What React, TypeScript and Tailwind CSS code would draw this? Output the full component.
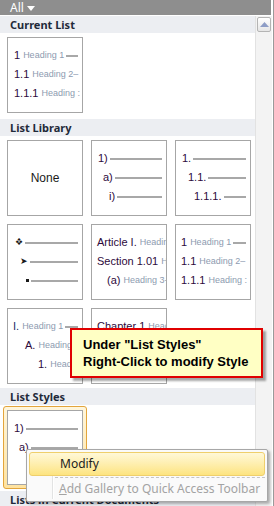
import React from "react";

const NUM = "text-[#2d0a3c]";
const HEAD = "text-[#8d9bb0] text-[9px]";

function Thumb({ children, className = "" }: { children?: React.ReactNode; className?: string }) {
  return (
    <div className={`relative h-[76px] w-[76px] overflow-hidden border border-[#a6a6a6] bg-white ${className}`}>
      {children}
    </div>
  );
}

function Line({ w }: { w?: string }) {
  return <span className={`ml-[2px] h-[2px] bg-[#a8a8a8] ${w ?? "flex-1"}`} />;
}

// pila de filas de texto dentro de cada miniatura
function Rows({ children }: { children: React.ReactNode }) {
  return (
    <div className="flex flex-col pt-[8px] pr-[4px] font-['Liberation_Sans',Arial,sans-serif] text-[11px] leading-[19px]">
      {children}
    </div>
  );
}

function HeadingRow({ num, label, pl }: { num: string; label: string; pl: string }) {
  return (
    <div className={`flex h-[19px] items-center whitespace-nowrap ${pl}`}>
      <span className={NUM}>{num}</span>
      <span className={`ml-[3px] ${HEAD}`}>{label}</span>
    </div>
  );
}

function NumRow({ num, pl }: { num: string; pl: string }) {
  return (
    <div className={`flex h-[19px] items-center whitespace-nowrap ${pl}`}>
      <span className={NUM}>{num}</span>
      <Line />
    </div>
  );
}

function SectionHeader({ title }: { title: string }) {
  return (
    <div className="h-[17px] bg-[#eceef2] pl-[10px] font-['Noto_Sans',sans-serif] text-[11px] font-bold leading-[17px] text-[#1f2a3a]">
      {title}
    </div>
  );
}

export default function App() {
  return (
    <div className="relative h-[506px] w-[274px] overflow-hidden border-r border-[#9a9a9a] bg-white font-['Noto_Sans',sans-serif]">
      {/* Barra superior "All" */}
      <div className="flex h-[16px] w-[271px] items-center border-b border-white bg-[#8e8e8e] pl-[10px] text-[12px] leading-none text-white">
        <span>All</span>
        <svg className="ml-[3px] mt-[1px] h-[5px] w-[8px]" viewBox="0 0 8 5">
          <path d="M0 0h8L4 5z" fill="white" />
        </svg>
      </div>

      <div className="flex h-[490px]">
        {/* Contenido de la galería */}
        <div className="w-[256px] border-r border-[#e2e2e2]">
          <SectionHeader title="Current List" />
          <div className="pb-[6px] pl-[7px] pt-[4px]">
            <Thumb>
              <Rows>
                <div className="flex h-[19px] items-center whitespace-nowrap pl-[6px]">
                  <span className={NUM}>1</span>
                  <span className={`ml-[3px] ${HEAD}`}>Heading 1</span>
                  <Line />
                </div>
                <HeadingRow num="1.1" label="Heading 2–" pl="pl-[6px]" />
                <HeadingRow num="1.1.1" label="Heading :" pl="pl-[6px]" />
              </Rows>
            </Thumb>
          </div>

          <SectionHeader title="List Library" />
          <div className="grid grid-cols-[76px_76px_76px] gap-[8px] px-[7px] pb-[4px] pt-[4px]">
            <Thumb className="flex items-center justify-center">
              <div className="flex h-full items-center justify-center font-['Liberation_Sans',Arial,sans-serif] text-[12px] text-[#1a1a1a]">
                None
              </div>
            </Thumb>
            <Thumb>
              <Rows>
                <NumRow num="1)" pl="pl-[6px]" />
                <NumRow num="a)" pl="pl-[11px]" />
                <NumRow num="i)" pl="pl-[17px]" />
              </Rows>
            </Thumb>
            <Thumb>
              <Rows>
                <NumRow num="1." pl="pl-[6px]" />
                <NumRow num="1.1." pl="pl-[12px]" />
                <NumRow num="1.1.1." pl="pl-[18px]" />
              </Rows>
            </Thumb>

            <Thumb>
              <Rows>
                <div className="flex h-[19px] items-center pl-[7px]">
                  <span className="text-[9px] leading-none text-[#1a1a1a]">❖</span>
                  <Line />
                </div>
                <div className="flex h-[19px] items-center pl-[12px]">
                  <span className="text-[9px] leading-none text-[#1a1a1a]">➤</span>
                  <Line />
                </div>
                <div className="flex h-[19px] items-center pl-[18px]">
                  <span className="h-[3px] w-[3px] bg-[#1a1a1a]" />
                  <Line />
                </div>
              </Rows>
            </Thumb>
            <Thumb>
              <Rows>
                <HeadingRow num="Article I." label="Heading 1" pl="pl-[5px]" />
                <HeadingRow num="Section 1.01" label="Heading 2" pl="pl-[5px]" />
                <HeadingRow num="(a)" label="Heading 3-" pl="pl-[15px]" />
              </Rows>
            </Thumb>
            <Thumb>
              <Rows>
                <div className="flex h-[19px] items-center whitespace-nowrap pl-[5px]">
                  <span className={NUM}>1</span>
                  <span className={`ml-[3px] ${HEAD}`}>Heading 1</span>
                  <Line />
                </div>
                <HeadingRow num="1.1" label="Heading 2–" pl="pl-[5px]" />
                <HeadingRow num="1.1.1" label="Heading :" pl="pl-[5px]" />
              </Rows>
            </Thumb>

            <Thumb>
              <Rows>
                <div className="flex h-[19px] items-center whitespace-nowrap pl-[5px]">
                  <span className="text-[#23306a]">I.</span>
                  <span className={`ml-[3px] ${HEAD}`}>Heading 1</span>
                  <Line />
                </div>
                <HeadingRow num="A." label="Heading 2" pl="pl-[17px]" />
                <HeadingRow num="1." label="Heading 3" pl="pl-[30px]" />
              </Rows>
            </Thumb>
            <Thumb>
              <Rows>
                <HeadingRow num="Chapter 1" label="Heading 1" pl="pl-[5px]" />
              </Rows>
            </Thumb>
          </div>

          <SectionHeader title="List Styles" />
          <div className="pl-[3px] pt-[1px]">
            <div className="h-[83px] w-[84px] rounded-[3px] border border-[#e3a53c] bg-gradient-to-b from-[#fff6dc] to-[#ffe3a0] p-[3px]">
              <div className="h-[75px] w-[76px] border border-[#a6a6a6] bg-white">
                <Rows>
                  <NumRow num="1)" pl="pl-[6px]" />
                  <NumRow num="a)" pl="pl-[11px]" />
                </Rows>
              </div>
            </div>
          </div>
          <div className="mt-[2px]">
            <SectionHeader title="Lists in Current Documents" />
          </div>
        </div>

        {/* Barra de desplazamiento */}
        <div className="w-[16px] bg-[#f3f3f3] pt-[1px]">
          <div className="ml-[1px] flex h-[15px] w-[14px] items-center justify-center rounded-[2px] border border-[#b4b4b4] bg-gradient-to-b from-white to-[#e6e6e6]">
            <svg className="h-[5px] w-[9px]" viewBox="0 0 9 5">
              <path d="M4.5 0L9 5H0z" fill="#8e9dc6" />
            </svg>
          </div>
        </div>
      </div>

      {/* Globo de ayuda */}
      <div className="absolute left-[70px] top-[328px] w-[193px] border-[2px] border-[#e00000] bg-[#ffffc4] py-[6px] pl-[11px] font-['Liberation_Sans',Arial,sans-serif] text-[13px] font-bold leading-[17px] text-black shadow-[3px_3px_2px_rgba(0,0,0,0.35)]">
        <div>Under "List Styles"</div>
        <div>Right-Click to modify Style</div>
      </div>

      {/* Menú contextual */}
      <div className="absolute left-[26px] top-[449px] flex w-[242px] flex-col rounded-[2px] border border-[#a7a7a7] bg-[#fafafa] p-[2px] font-['Noto_Sans',sans-serif] text-[12px] shadow-[2px_2px_3px_rgba(0,0,0,0.3)]">
        <div className="pointer-events-none absolute bottom-[2px] left-[25px] top-[2px] w-[2px] border-l border-[#e2e3e3] bg-white" />
        <div className="relative flex h-[24px] items-center rounded-[3px] border border-[#efcf6c] bg-gradient-to-b from-[#fff8d8] to-[#fde47f] pl-[30px] text-[#1c1c1c]">
          Modify
        </div>
        <div className="ml-[26px] mt-[1px] border-t border-dashed border-[#c5c5c5]" />
        <div className="relative flex h-[21px] items-center pl-[30px] text-[#a3a3a3]">
          <span>
            <span className="underline">A</span>dd Gallery to Quick Access Toolbar
          </span>
        </div>
      </div>
    </div>
  );
}
